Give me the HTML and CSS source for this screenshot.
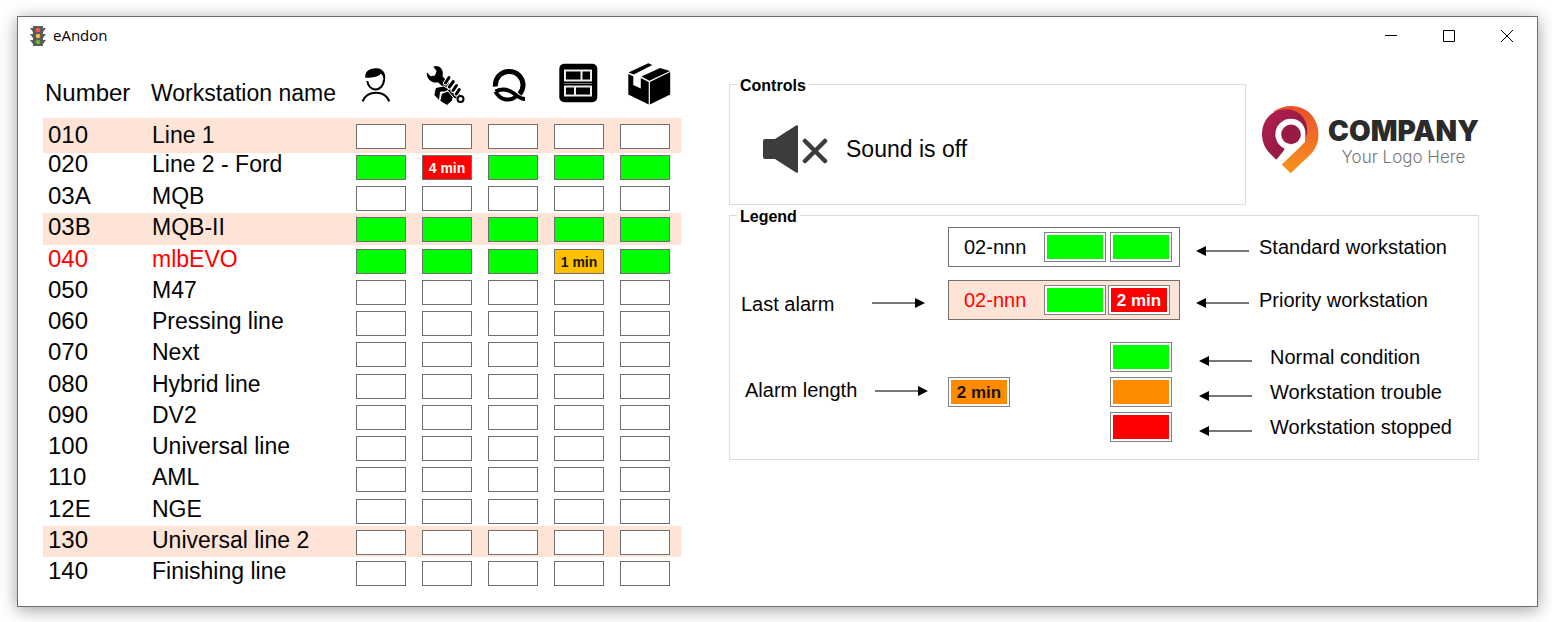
FILE: index.html
```html
<!DOCTYPE html>
<html lang="en">
<head>
<meta charset="utf-8">
<title>eAndon</title>
<link rel="stylesheet" href="styles.css">
</head>
<body>
<div class="window">
  <header class="titlebar">
    <svg class="app-icon" viewBox="0 0 16 20" aria-hidden="true">
      <path fill="#5a5a5a" d="M3 0h10v2h3l-3 4v2h3l-3 4v2h3l-3 4v2H3v-2l-3-4h3v-2L0 8h3V6L0 2h3z"/>
      <circle cx="8" cy="4" r="2.3" fill="#ee5a52"/>
      <circle cx="8" cy="10" r="2.3" fill="#f5b84a"/>
      <circle cx="8" cy="16" r="2.3" fill="#6fb544"/>
    </svg>
    <h1 class="app-name">eAndon</h1>
    <div class="window-buttons">
      <button class="window-button" type="button" aria-label="Minimize"><svg viewBox="0 0 12 12"><path d="M0 5.500h12"/></svg></button>
      <button class="window-button" type="button" aria-label="Maximize"><svg viewBox="0 0 12 12"><path d="M.5.5h11v11H.5z"/></svg></button>
      <button class="window-button" type="button" aria-label="Close"><svg viewBox="0 0 12 12"><path d="M0 0l12 12M12 0L0 12"/></svg></button>
    </div>
  </header>

  <main class="content">
    <table class="stations">
      <colgroup>
        <col class="col-number"><col class="col-name">
        <col class="col-state"><col class="col-state"><col class="col-state"><col class="col-state"><col class="col-state"><col>
      </colgroup>
      <thead>
        <tr>
          <th class="head-number" scope="col">Number</th>
          <th scope="col">Workstation name</th>
          <th scope="col" aria-label="Operator"><svg class="head-icon" viewBox="0 0 66 46">
            <path d="M17.300 16.800C16.500 11 21 7.500 26 7.500c2-.8 11-.5 11.200 8 .1 3-.4 5-1 6.500l-1.300-7-2-2.500-1.200 1.500c-4 2.500-9 2.800-14.400 2.800z"/>
            <path class="thin" d="M19.300 20c.6 5 4 8.500 8.300 8.500s8.300-4 8.300-10M14.500 40.300C17 34.500 22 31.700 28 31.700s11 2.800 13.300 8.600"/>
          </svg></th>
          <th scope="col" aria-label="Maintenance"><svg class="head-icon" viewBox="0 0 66 46">
            <path d="M19.300 5.700C22 4.500 25 5 27 7.300c1.800 2 2.400 5 1.600 8.200L46 33.500l-5 4L24 21.300c-3 .8-6.500 0-8.800-2.500-2-2.200-2.800-5-2.300-7.600l3.600 4 4.500-.6 1.600-4.600z"/>
            <circle cx="46.500" cy="38" r="3" class="ring"/>
            <path class="finger-gap" d="M35 16.500l-3.500 5.500M39.300 20.500l-4 5.500M42.500 24.500l-3.500 5M45.300 28.500l-3 4.500"/>
            <path class="finger" d="M35 16.500l-3.500 5.500M39.300 20.500l-4 5.500M42.500 24.500l-3.500 5M45.300 28.500l-3 4.500"/>
            <path class="edge" d="M21.500 26.500l8-1.500 5.500 3-3.500 3H26.500l-1 9-5.700-6z"/>
            <path class="edge" d="M27.500 32.500l6.500-2.500 5.200 6.300-.7 3.200L33 44.500l-7.200-4.500z"/>
          </svg></th>
          <th scope="col" aria-label="Quality"><svg class="head-icon" viewBox="0 0 66 46">
            <path class="thick" d="M15.400 25.500C14.800 17 21 10.500 29 10.500c8.500 0 14.300 6.500 14 14-.2 4-1.500 6.500-3.500 8.500"/>
            <path class="leaf" d="M15.500 30.500c7-3.500 13-2 18.500 2 4 3 6.500 5.500 11 5.500M15.500 30.500c4 8.500 14 10.500 20.500 5"/>
          </svg></th>
          <th scope="col" aria-label="Systems"><svg class="head-icon" viewBox="0 0 66 46">
            <rect x="13.300" y="2.700" width="38" height="38.600" rx="5"/>
            <path class="light" d="M19 9.500h26v10H19zM35.500 9.500v10M19 25.500h26v9H19zM29 25.500v9"/>
            <path class="faint" d="M18 22.500h28"/>
          </svg></th>
          <th scope="col" aria-label="Material"><svg class="head-icon" viewBox="0 0 66 46">
            <path d="M16.300 13l5 2.200V24l7.500 3.500V17l7.900 4v22.500l-20.400-10zM37.900 21l20.300-10v22.500l-20.300 10zM16.500 11.500L36.300 2.300l4 1.700-18.500 9.500zM29.500 15.500L48 7l10 3-20.700 9.700z"/>
          </svg></th>
          <td></td>
        </tr>
      </thead>
      <tbody>
        <tr class="priority"><td>010</td><td>Line 1</td><td><span class="state"></span></td><td><span class="state"></span></td><td><span class="state"></span></td><td><span class="state"></span></td><td><span class="state"></span></td><td></td></tr>
        <tr><td>020</td><td>Line 2 - Ford</td><td><span class="state ok"></span></td><td><span class="state stopped">4 min</span></td><td><span class="state ok"></span></td><td><span class="state ok"></span></td><td><span class="state ok"></span></td><td></td></tr>
        <tr><td>03A</td><td>MQB</td><td><span class="state"></span></td><td><span class="state"></span></td><td><span class="state"></span></td><td><span class="state"></span></td><td><span class="state"></span></td><td></td></tr>
        <tr class="priority"><td>03B</td><td>MQB-II</td><td><span class="state ok"></span></td><td><span class="state ok"></span></td><td><span class="state ok"></span></td><td><span class="state ok"></span></td><td><span class="state ok"></span></td><td></td></tr>
        <tr class="last-alarm"><td>040</td><td>mlbEVO</td><td><span class="state ok"></span></td><td><span class="state ok"></span></td><td><span class="state ok"></span></td><td><span class="state trouble">1 min</span></td><td><span class="state ok"></span></td><td></td></tr>
        <tr><td>050</td><td>M47</td><td><span class="state"></span></td><td><span class="state"></span></td><td><span class="state"></span></td><td><span class="state"></span></td><td><span class="state"></span></td><td></td></tr>
        <tr><td>060</td><td>Pressing line</td><td><span class="state"></span></td><td><span class="state"></span></td><td><span class="state"></span></td><td><span class="state"></span></td><td><span class="state"></span></td><td></td></tr>
        <tr><td>070</td><td>Next</td><td><span class="state"></span></td><td><span class="state"></span></td><td><span class="state"></span></td><td><span class="state"></span></td><td><span class="state"></span></td><td></td></tr>
        <tr><td>080</td><td>Hybrid line</td><td><span class="state"></span></td><td><span class="state"></span></td><td><span class="state"></span></td><td><span class="state"></span></td><td><span class="state"></span></td><td></td></tr>
        <tr><td>090</td><td>DV2</td><td><span class="state"></span></td><td><span class="state"></span></td><td><span class="state"></span></td><td><span class="state"></span></td><td><span class="state"></span></td><td></td></tr>
        <tr><td>100</td><td>Universal line</td><td><span class="state"></span></td><td><span class="state"></span></td><td><span class="state"></span></td><td><span class="state"></span></td><td><span class="state"></span></td><td></td></tr>
        <tr><td>110</td><td>AML</td><td><span class="state"></span></td><td><span class="state"></span></td><td><span class="state"></span></td><td><span class="state"></span></td><td><span class="state"></span></td><td></td></tr>
        <tr><td>12E</td><td>NGE</td><td><span class="state"></span></td><td><span class="state"></span></td><td><span class="state"></span></td><td><span class="state"></span></td><td><span class="state"></span></td><td></td></tr>
        <tr class="priority"><td>130</td><td>Universal line 2</td><td><span class="state"></span></td><td><span class="state"></span></td><td><span class="state"></span></td><td><span class="state"></span></td><td><span class="state"></span></td><td></td></tr>
        <tr><td>140</td><td>Finishing line</td><td><span class="state"></span></td><td><span class="state"></span></td><td><span class="state"></span></td><td><span class="state"></span></td><td><span class="state"></span></td><td></td></tr>
      </tbody>
    </table>

    <section class="side">
      <div class="side-top">
        <fieldset class="group controls">
          <legend>Controls</legend>
          <button class="sound" type="button">
            <svg class="sound-icon" viewBox="0 0 66 50" aria-hidden="true">
              <path fill="#3c3c3c" d="M3 15h10L34 1.500q2-1 2 1v45q0 2-2 1L13 35H3q-2 0-2-2V17q0-2 2-2z"/>
              <path fill="none" stroke="#3c3c3c" stroke-width="4.500" stroke-linecap="round" d="M43 17l20 20M63 17L43 37"/>
            </svg>
            Sound is off
          </button>
        </fieldset>
        <div class="logo">
          <svg class="logo-mark" viewBox="0 0 57 68" aria-hidden="true">
            <defs>
              <linearGradient id="orange" x1="0" y1="0" x2="0" y2="1"><stop offset="0" stop-color="#ea4f2a"/><stop offset="1" stop-color="#f9941e"/></linearGradient>
              <linearGradient id="purple" x1="0" y1="0" x2="1" y2="1"><stop offset="0" stop-color="#b51f51"/><stop offset="1" stop-color="#85163a"/></linearGradient>
            </defs>
            <path fill="url(#orange)" d="M11 6C25-4 43-1 51.500 11.500 59 23 58 39 48.700 48.300L28.700 67.300 19.700 58.500 43 36V14z"/>
            <path fill="url(#purple)" d="M14.700 54L8.500 48C-2 38-3 21 6.500 10.500 15 1.500 30 1 38.500 8.500c6.500 6 7.500 14 6 21L30 46 22 47z"/>
            <path fill="#fff" d="M28.700 12.800a15.500 15.500 0 0 0-7 29.300c.8.500.9 1.500.2 2.300L14.300 53.700l5.400 4.800L39 40c8.500-9 5.200-27.200-10.300-27.200z"/>
            <circle cx="29" cy="28.400" r="9.800" fill="#961a43"/>
          </svg>
          <div class="logo-text">
            <strong class="logo-name">COMPANY</strong>
            <span class="logo-tagline">Your Logo Here</span>
          </div>
        </div>
      </div>

      <fieldset class="group">
        <legend>Legend</legend>
        <div class="key">
          <div class="key-row">
            <span></span><span></span>
            <span class="sample"><span class="sample-name">02-nnn</span><span class="chip ok"></span><span class="chip ok"></span></span>
            <svg class="arrow" viewBox="0 0 54 20"><path d="M9 14h44"/><path class="tip" d="M0 14l10-5v10z"/></svg>
            <span>Standard workstation</span>
          </div>
          <div class="key-row">
            <span class="key-label">Last alarm</span>
            <svg class="arrow" viewBox="0 0 54 20"><path d="M0 13h44"/><path class="tip" d="M53 13l-10-5v10z"/></svg>
            <span class="sample highlighted"><span class="sample-name">02-nnn</span><span class="chip ok"></span><span class="chip stopped">2 min</span></span>
            <svg class="arrow" viewBox="0 0 54 20"><path d="M9 13h44"/><path class="tip" d="M0 13l10-5v10z"/></svg>
            <span>Priority workstation</span>
          </div>
        </div>
        <div class="key conditions">
          <div class="key-row">
            <span></span><span></span>
            <span class="swatches"><span class="chip ok"></span></span>
            <svg class="arrow" viewBox="0 0 54 20"><path d="M9 14h44"/><path class="tip" d="M0 14l10-5v10z"/></svg>
            <span>Normal condition</span>
          </div>
          <div class="key-row">
            <span class="key-label">Alarm length</span>
            <svg class="arrow" viewBox="0 0 54 20"><path d="M0 9h44"/><path class="tip" d="M53 9l-10-5v10z"/></svg>
            <span class="swatches"><span class="chip warning">2 min</span><span class="chip warning"></span></span>
            <svg class="arrow" viewBox="0 0 54 20"><path d="M9 14h44"/><path class="tip" d="M0 14l10-5v10z"/></svg>
            <span>Workstation trouble</span>
          </div>
          <div class="key-row">
            <span></span><span></span>
            <span class="swatches"><span class="chip stopped"></span></span>
            <svg class="arrow" viewBox="0 0 54 20"><path d="M9 14h44"/><path class="tip" d="M0 14l10-5v10z"/></svg>
            <span>Workstation stopped</span>
          </div>
        </div>
      </fieldset>
    </section>
  </main>
</div>
</body>
</html>
```
FILE: styles.css
```css
* {
  box-sizing: border-box;
}

body {
  margin: 0;
  padding: 16px 14px 15px 17px;
  background: #fff;
  color: #050505;
  font-family: "Liberation Sans", Arial, sans-serif;
}

button {
  padding: 0;
  border: 0;
  background: none;
  color: inherit;
  font: inherit;
}

.window {
  border: 1px solid #6e6e6e;
  background: #fff;
  box-shadow: 0 3px 16px rgba(0, 0, 0, 0.38);
}

.titlebar {
  display: flex;
  align-items: center;
  height: 38px;
  padding: 0 1px 0 12px;
  gap: 7px;
}

.app-icon {
  width: 16px;
  height: 20px;
}

.app-name {
  margin: 0;
  padding-bottom: 2px;
  color: #000;
  font: 400 15px/20px "Open Sans", "Noto Sans", sans-serif;
}

.window-buttons {
  display: flex;
  margin-left: auto;
}

.window-button {
  display: grid;
  place-items: center;
  width: 58px;
  height: 38px;
}

.window-button svg {
  width: 12px;
  height: 12px;
  fill: none;
  stroke: #000;
}

.content {
  display: flex;
  align-items: flex-start;
  gap: 48px;
  padding: 0 58px 18px 25px;
}

/* Workstation table */

.stations {
  flex: none;
  width: 638px;
  table-layout: fixed;
  border-collapse: collapse;
  font-size: 23px;
  line-height: 28px;
}

.col-number {
  width: 107px;
}

.col-name {
  width: 198px;
}

.col-state {
  width: 66px;
}

.stations th,
.stations td {
  padding: 0;
  text-align: left;
  vertical-align: top;
  font-weight: 400;
  white-space: nowrap;
}

.stations thead tr {
  height: 63px;
}

.stations thead th {
  padding-bottom: 11px;
  vertical-align: bottom;
}

.stations thead .head-number {
  padding-left: 2px;
  font-size: 24px;
}

.stations thead th:nth-child(2) {
  padding-left: 1px;
}

.head-icon {
  display: block;
  width: 66px;
  height: 46px;
}

.head-icon .thin,
.head-icon .thick,
.head-icon .leaf,
.head-icon .ring,
.head-icon .finger,
.head-icon .finger-gap,
.head-icon .light,
.head-icon .faint {
  fill: none;
  stroke: #000;
  stroke-width: 2;
}

.head-icon .thick {
  stroke-width: 5;
}

.head-icon .leaf {
  stroke-width: 4;
  stroke-linejoin: round;
}

.head-icon .ring {
  fill: #fff;
}

.head-icon .finger {
  stroke-width: 3;
  stroke-linecap: round;
}

.head-icon .finger-gap {
  stroke: #fff;
  stroke-width: 5;
  stroke-linecap: round;
}

.head-icon .edge {
  stroke: #fff;
  stroke-width: 1;
}

.head-icon .light {
  stroke: #eee;
  stroke-width: 2;
}

.head-icon .faint {
  stroke: #777;
  stroke-width: 1;
}

.stations tbody tr {
  height: 31px;
}

.stations tbody tr:nth-child(4n) {
  height: 32px;
}

.stations tbody td:first-child {
  padding-left: 5px;
  font-size: 24px;
}

.stations tbody td:nth-child(2) {
  padding-left: 2px;
}

.stations tbody .priority {
  background: #fde4d7;
}

.stations tbody .last-alarm {
  color: #f00;
}

.state {
  display: block;
  width: 50px;
  height: 25px;
  margin: 4px auto 0;
  border: 1px solid #6f6f6f;
  background: #fff;
  color: #1c1400;
  font-size: 14px;
  font-weight: 700;
  line-height: 24px;
  text-align: center;
}

.stations tbody tr:nth-child(1) {
  height: 35px;
}

.stations tbody tr:nth-child(1) td {
  padding-top: 3px;
}

.stations tbody tr:nth-child(1) .state {
  margin-top: 3px;
}

.stations tbody tr:nth-child(2) {
  height: 29px;
  line-height: 22px;
}

.stations tbody tr:nth-child(2) .state {
  margin-top: 2px;
}

.ok {
  background: #0f0;
}

.stopped {
  background: #f00;
  color: #fff;
}

.trouble {
  background: #ffc000;
}

.warning {
  background: #ff8c00;
}

/* Controls and legend */

.side {
  flex: 1;
  min-width: 0;
  padding-top: 19px;
}

.side-top {
  display: flex;
  gap: 16px;
}

.group {
  min-width: 0;
  margin: 0;
  padding: 0 7px;
  border: 1px solid #dcdcdc;
}

.group legend {
  padding: 3px 3px 0;
  color: #000;
  font-size: 16px;
  font-weight: 700;
  line-height: 17px;
}

.controls {
  flex: 1;
}

.sound {
  display: flex;
  align-items: center;
  gap: 18px;
  margin: 30px 25px;
  font-size: 23px;
}

.sound-icon {
  width: 66px;
  height: 50px;
}

.logo {
  display: flex;
  align-items: center;
  gap: 9px;
}

.logo-mark {
  width: 57px;
  height: 68px;
}

.logo-text {
  display: flex;
  flex-direction: column;
  align-items: center;
  width: 151px;
  padding-top: 7px;
  white-space: nowrap;
}

.logo-name {
  color: #2b2b2b;
  font: 900 28px/28px Inter, sans-serif;
}

.logo-tagline {
  color: #777;
  font: 300 17px/24px Inter, sans-serif;
}

.key {
  display: grid;
  gap: 13px;
  padding-top: 2px;
  font-size: 20px;
}

.key-row {
  display: grid;
  grid-template-columns: 135px 76px 248px 63px 1fr;
  align-items: center;
  white-space: nowrap;
}

.key-label {
  align-self: end;
  padding-left: 4px;
  line-height: 28px;
  padding-bottom: 2px;
}

.arrow {
  width: 54px;
  height: 20px;
  fill: none;
  stroke: #777;
  stroke-width: 2;
}

.arrow .tip {
  fill: #000;
  stroke: none;
}

.sample {
  display: flex;
  align-items: center;
  gap: 4px;
  width: 232px;
  height: 40px;
  padding-left: 15px;
  border: 1px solid #6f6f6f;
}

.sample.highlighted {
  gap: 2px;
  background: #fde4d7;
  color: #f00;
}

.sample-name {
  flex: 0 0 76px;
}

.sample.highlighted .sample-name {
  flex-basis: 78px;
}

.chip {
  flex: none;
  width: 62px;
  height: 30px;
  border: 1px solid #808080;
  outline: 2px solid #fff;
  outline-offset: -3px;
  color: #1c1400;
  font-size: 17px;
  font-weight: 700;
  line-height: 29px;
  text-align: center;
}

.chip.stopped {
  color: #fff;
}

.conditions {
  gap: 5px;
  padding: 22px 0 17px;
}

.conditions .key-row > :last-child {
  padding-left: 11px;
}

.conditions .arrow {
  margin-left: 3px;
}

.conditions .key-label {
  align-self: start;
  padding: 0 0 0 8px;
  line-height: 26px;
}

.swatches {
  display: flex;
  justify-content: space-between;
  width: 224px;
}

.swatches .chip:only-child {
  margin-left: auto;
}
```
